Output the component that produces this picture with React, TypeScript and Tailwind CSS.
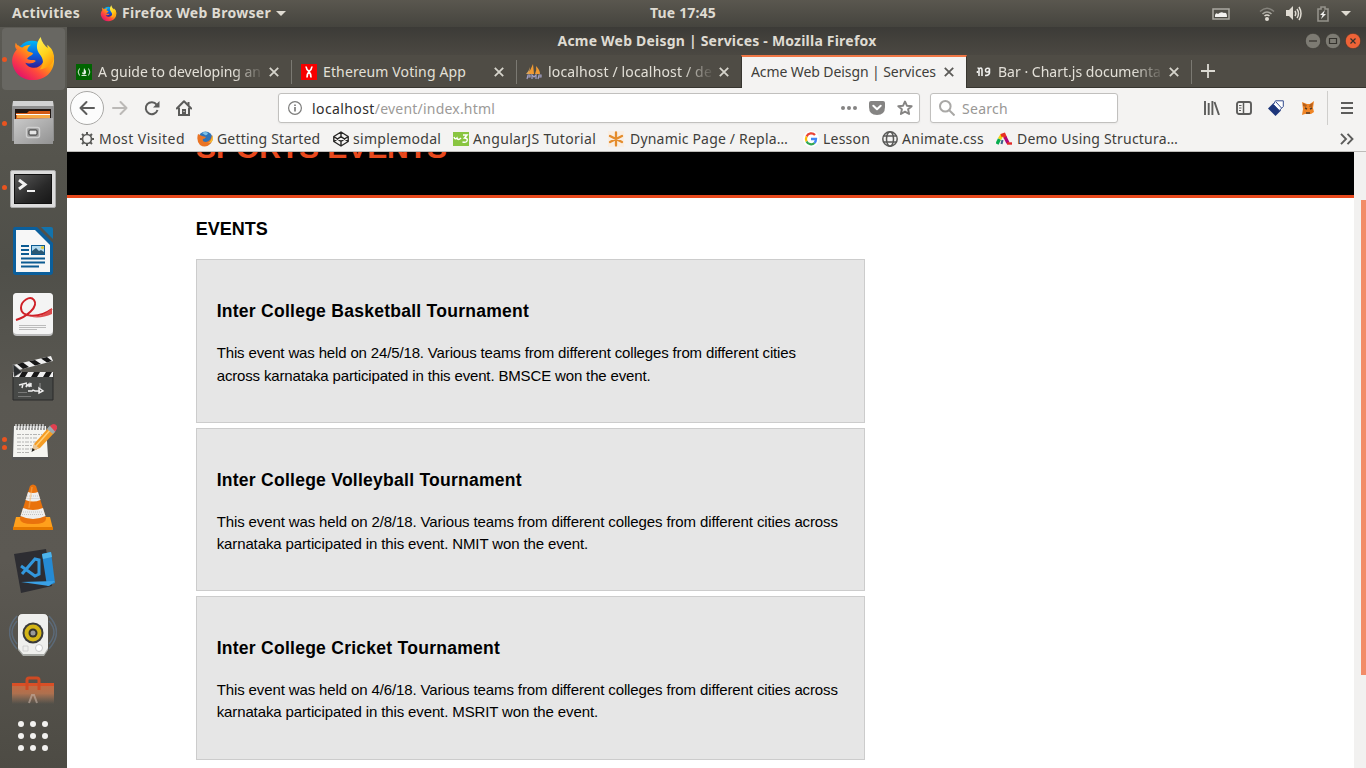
import type { ReactNode } from "react";

function FirefoxLogo({ size }: { size: number }) {
  return (
    <svg width={size} height={size} viewBox="0 0 48 48" className="shrink-0">
      <defs>
        <linearGradient id="ffBody" x1="0.85" y1="0.1" x2="0.15" y2="0.9">
          <stop offset="0" stopColor="#ffe226" />
          <stop offset="0.35" stopColor="#ffa010" />
          <stop offset="0.65" stopColor="#ff4a3c" />
          <stop offset="1" stopColor="#e3106b" />
        </linearGradient>
        <linearGradient id="ffGlobe" x1="0.5" y1="0" x2="0.5" y2="1">
          <stop offset="0" stopColor="#00b8f5" />
          <stop offset="0.45" stopColor="#0a62e0" />
          <stop offset="1" stopColor="#3a0a80" />
        </linearGradient>
        <linearGradient id="ffTail" x1="0" y1="0" x2="0.5" y2="1">
          <stop offset="0" stopColor="#fff45c" />
          <stop offset="0.6" stopColor="#ffd21c" />
          <stop offset="1" stopColor="#ff9a0c" />
        </linearGradient>
      </defs>
      <circle cx="23" cy="21" r="16" fill="url(#ffGlobe)" />
      <path d="M6 7 C5 10 5 12 7 14 C3 19 1 24 3 31 C6 41 14 46 24 46 C37 46 46 37 46 25 C46 21 45 18 43 15 L37 15 C38 24 33 34 24 33 C19 33 17 30 16 28 C19 29 24 29 27 26 C25 24 21 26 18 24 C18 22 24 20 24 18 C22 16 19 17 18 15 C18 13 20 10 22 9 C18 9 15 10 13 12 C11 12 10 11 9 10 C7 10 7 8 6 7Z" fill="url(#ffBody)" />
      <path d="M32 1 C27 7 27 14 31 19 C35 24 36 29 31 35 C39 34 46 29 46 22 C45 14 43 13 39 9 C39 11 39 12 40 13 C36 10 33 6 32 1Z" fill="url(#ffTail)" />
    </svg>
  );
}

const dock: { name: string; dots: number; art: ReactNode }[] = [
  { name: "firefox", dots: 1, art: <g /> },
  {
    name: "files",
    dots: 1,
    art: (
      <>
        <path d="M4 2 H44 L45 9 H3Z" fill="#d2d2d2" />
        <path d="M3 7 H45 V42 H3Z" fill="#8f8f8f" />
        <rect x="6" y="10" width="36" height="13" fill="#201612" />
        <path d="M7 14 H18 L20 12 H41 V21 H7Z" fill="#d35a14" />
        <path d="M7 15.500 H41" stroke="#fff" strokeWidth="1.200" />
        <path d="M8 17.500 H41" stroke="#f7a945" strokeWidth="3" />
        <path d="M5 20 L44 19 V45 H5Z" fill="url(#cabinet)" />
        <rect x="17.500" y="28.500" width="13" height="10" rx="2" fill="#9c9c9c" stroke="#d0d0d0" strokeWidth="1.400" />
        <rect x="20" y="31" width="8" height="5" rx="1" fill="#e5e5e5" stroke="#333" />
      </>
    ),
  },
  {
    name: "terminal",
    dots: 1,
    art: (
      <>
        <rect x="1.500" y="7.500" width="45" height="37" rx="1.500" fill="#dcdcdc" stroke="#a9a9a9" />
        <rect x="5" y="11" width="38" height="30" fill="#111" />
        <rect x="6" y="12" width="36" height="28" fill="url(#screen)" />
        <path d="M10 17 L16 21.500 L10 26" fill="none" stroke="#f2f2f2" strokeWidth="3" />
        <path d="M18 28 H26" stroke="#f2f2f2" strokeWidth="2" />
      </>
    ),
  },
  {
    name: "writer",
    dots: 0,
    art: (
      <>
        <path d="M6 0 H28 L44 16 V45 Q44 48 41 48 H7 Q4 48 4 45 V3 Q4 0 6 0Z" fill="#0b5f9c" />
        <path d="M32 0 H42 Q44 0 44 2 V12Z" fill="#1273ad" />
        <path d="M7 3 H26 L41 18 V45 H7Z" fill="#f7f7f7" />
        <path d="M12 19 H20 M12 23 H20 M12 27 H20 M12 31.500 H36 M12 35.500 H36 M12 39.500 H30" stroke="#0c5b92" strokeWidth="2" />
        <rect x="22.500" y="18.500" width="13" height="9" fill="#b2d9ee" stroke="#0c5b92" />
        <path d="M23 27 V24 L27 21 L30 24 L32 23 L35 25 V27Z" fill="#2b5874" />
        <circle cx="33.500" cy="20.500" r="1.600" fill="#e3c832" />
      </>
    ),
  },
  {
    name: "viewer",
    dots: 0,
    art: (
      <>
        <rect x="4" y="2" width="40" height="43" rx="4" fill="#bcbcbc" />
        <rect x="4" y="2" width="40" height="41" rx="4" fill="#f4f4f4" />
        <path d="M7 29 C17 26 30 16 25 9 C21 4 12 10 12 17 C12 26 29 28 43 18" fill="none" stroke="#cf2027" strokeWidth="2" />
        <path d="M16 23 C25 28 35 25 43 17 V23 C34 27 23 28 16 23Z" fill="#dc4b4d" />
        <path d="M10 34.500 H37 M10 36.500 H37 M10 38.500 H28" stroke="#bbb" strokeWidth="1" />
      </>
    ),
  },
  {
    name: "clapper",
    dots: 0,
    art: (
      <>
        <path d="M4 18 H44 V45 H4Z" fill="#474947" stroke="#2a2a2a" />
        <path d="M4 17 H44 V22 H4Z" fill="#f0f0f0" />
        <path d="M10 22 L13 17 H19 L16 22Z M22 22 L25 17 H31 L28 22Z M34 22 L37 17 H43 L40 22Z" fill="#181818" />
        <path d="M4 10 L42 1 L44 6 L6 16Z" fill="#f0f0f0" />
        <path d="M8 9 L14 14 L20 12 L14 7.500Z M20 6 L26 10.500 L32 9 L26 5Z M32 3.500 L38 7.500 L43 6 L38 2Z" fill="#181818" />
        <path d="M4 9 L13 17 L5 22Z" fill="#2a2d2f" stroke="#8a8a8a" strokeWidth=".5" />
        <path d="M10 30 L18 28 M14 29 L13 33 M18 29 L17 32 L20 29 V32 L22 28 V32 M19 36 H23 L24 35 L26 36 H31 M30 33 L34 36 L30 38Z" fill="none" stroke="#eee" strokeWidth="1.400" />
        <path d="M31 28 V33" stroke="#aaa" strokeWidth=".8" />
        <path d="M9 37.500 H18 M9 41.500 H22" stroke="#858585" strokeWidth=".8" />
      </>
    ),
  },
  {
    name: "notes",
    dots: 2,
    art: (
      <>
        <path d="M4 7 H38 L40 41 H3Z" fill="#555" />
        <path d="M5 7 H37 L39 38 H4Z" fill="#f5f5f2" />
        <path d="M8 6 v5 M11 6 v5 M14 6 v5 M17 6 v5 M20 6 v5 M23 6 v5 M26 6 v5 M29 6 v5 M32 6 v5 M35 6 v5" stroke="#444" strokeWidth="1" />
        <path d="M7 5 v4 M10 5 v4 M13 5 v4 M16 5 v4 M19 5 v4 M22 5 v4 M25 5 v4 M28 5 v4 M31 5 v4 M34 5 v4" stroke="#e8e8e8" strokeWidth="1.200" />
        <path d="M8 15.500 H33 M8 19 H28 M8 23 H32 M8 26.500 H24 M8 30 H28 M8 33.500 H20" stroke="#999" strokeWidth=".7" strokeDasharray="4 1 2 1" />
        <path d="M23 32 L25 25 L40 8 L46 13 L31 29Z" fill="#f59c24" />
        <path d="M27 27 L42 10" stroke="#ffd07a" strokeWidth="1.500" />
        <path d="M23 32 L25 25 L30 29Z" fill="#e9c79a" />
        <path d="M22.500 33 L23.500 29 L26 31Z" fill="#222" />
        <path d="M38 10 L41 6.500 L47 11.500 L44 15Z" fill="#9eaab0" />
        <path d="M41 7 Q45 3 48 7 Q49 9 46 12.500Z" fill="#e04050" />
      </>
    ),
  },
  {
    name: "player",
    dots: 0,
    art: (
      <>
        <path d="M7 34 H41 L44 46 H4Z" fill="#ffa01c" />
        <path d="M4 44 H44 V47 H4Z" fill="#e37900" />
        <path d="M21 3 Q24 0 27 3 L37 35 Q38 41 24 41 Q10 41 11 35Z" fill="#e9720d" />
        <path d="M19 9 Q24 11 29 9 L31.500 17 Q24 20 16.500 17Z" fill="#eee" />
        <path d="M14 25 Q24 29 34 25 L36.500 33 Q24 39 11.500 33Z" fill="#eee" />
        <path d="M18 13 H30 M17.500 15.500 H31 M14 29 H34 M13 31.500 H35" stroke="#c4c4c4" strokeDasharray="1 1" />
        <path d="M23 4 L20 25" stroke="#ffb35b" strokeWidth="1.500" opacity=".5" />
      </>
    ),
  },
  {
    name: "code",
    dots: 0,
    art: (
      <>
        <path d="M5 7 L37 2 L43 39 L12 46Z" fill="#2d2d32" />
        <path d="M33 7 L42 5 L46 36 L38 39Z" fill="#258ad4" />
        <path d="M33 7 L42 5 L43 10 L34 12Z" fill="#4eb4ec" />
        <path d="M12 35 L46 34 L40 39Z" fill="#3aa1e6" />
        <path d="M12 19 L26 29 L30 27 V13 L26 12 L13 27" fill="none" stroke="#3297dc" strokeWidth="3" />
      </>
    ),
  },
  {
    name: "speaker",
    dots: 0,
    art: (
      <>
        <path d="M8 5 Q-7 21 8 38 M8 10 Q-2 21 8 33 M40 5 Q55 21 40 38 M40 10 Q50 21 40 33" fill="none" stroke="#5f7894" strokeWidth="1.500" opacity=".6" />
        <path d="M14 3 H34 Q39 3 39 8 V39 L35 45 H14 L9 39 V8 Q9 3 14 3Z" fill="#a9aba7" />
        <path d="M14 3 H34 Q39 3 39 8 V37 L35 43 H14 L9 37 V8 Q9 3 14 3Z" fill="#efefed" />
        <circle cx="24" cy="22" r="10.500" fill="#3a3a3a" />
        <circle cx="24" cy="22" r="8.500" fill="#d4b516" />
        <circle cx="24" cy="22" r="4.500" fill="#37342c" />
        <circle cx="24" cy="22" r="2.500" fill="#999" />
        <circle cx="30" cy="37" r="3.500" fill="#fff" stroke="#c8c8c8" />
        <path d="M14 35 H19 V40 H14Z" fill="none" stroke="#ccc" strokeWidth=".8" />
      </>
    ),
  },
];

function Dock() {
  return (
    <aside className="relative flex w-[67px] shrink-0 flex-col overflow-hidden bg-[linear-gradient(180deg,#5b5a54_0%,#55544d_18%,#4f4f49_32%,#5a5852_50%,#5c5953_72%,#4d4b44_100%)] pr-px">
      <svg width="0" height="0" className="absolute">
        <defs>
          <linearGradient id="cabinet" x1="0" y1="0" x2="1" y2="1"><stop stopColor="#cacaca" /><stop offset="1" stopColor="#929292" /></linearGradient>
          <linearGradient id="screen" x1="0" y1="0" x2="1" y2="1"><stop stopColor="#585858" /><stop offset=".6" stopColor="#292929" /><stop offset="1" stopColor="#171717" /></linearGradient>
          <linearGradient id="bag" x1="0" y1="0" x2="0" y2="1"><stop stopColor="#c9693f" /><stop offset=".5" stopColor="#b8744f" stopOpacity=".9" /><stop offset="1" stopColor="#a57c60" stopOpacity="0" /></linearGradient>
        </defs>
      </svg>
      {dock.map((d, i) => (
        <div key={d.name} className="relative flex h-16 shrink-0 items-center justify-center">
          {i === 0 && <div className="absolute left-0.5 right-px top-px h-[62px] rounded bg-[#686762]" />}
          {d.dots > 0 && (
            <div className="absolute left-[2px] flex flex-col gap-[3px]">
              {Array.from({ length: d.dots }, (_, n) => <i key={n} className="size-[5px] rounded-full bg-[#e95420]" />)}
            </div>
          )}
          <div className="relative">
            {i === 0 ? <FirefoxLogo size={46} /> : <svg width="48" height="48" viewBox="0 0 48 48">{d.art}</svg>}
          </div>
        </div>
      ))}
      <div className="flex h-[38px] shrink-0 justify-center overflow-hidden pt-2">
        <svg width="48" height="30" viewBox="0 0 48 30">
          <path d="M3 8 H45 V29 H3Z" fill="url(#bag)" />
          <path d="M3 8 H45 V11 H3Z" fill="#d94f26" />
          <path d="M18 15 V5 Q18 3 20 3 H28 Q30 3 30 5 V15" fill="none" stroke="#cf4a23" strokeWidth="3" />
          <path d="M20 28 L23 20 H25 L28 28" fill="none" stroke="#c4b2a7" strokeWidth="2" opacity=".6" />
        </svg>
      </div>
      <div className="grid grid-cols-3 gap-1.5 self-center pt-[16px]">
        {Array.from({ length: 9 }, (_, n) => <i key={n} className="size-1.5 rounded-full bg-[#f2f1ef]" />)}
      </div>
    </aside>
  );
}

function TopBar() {
  return (
    <header className="grid h-[27px] shrink-0 grid-cols-[1fr_auto_1fr] items-center bg-[linear-gradient(#5a574f,#45443e)] font-bold text-[#dfdbd2]">
      <div className="flex items-center pl-3">
        <span className="w-[88px] pb-0.5 tracking-[0.3px]">Activities</span>
        <FirefoxLogo size={17} />
        <span className="ml-[5px] pb-0.5 tracking-[0.3px]">Firefox Web Browser</span>
        <svg width="10" height="6" className="ml-[5px]"><path d="M0 0 H10 L5 5Z" fill="currentColor" /></svg>
      </div>
      <span className="pb-0.5 tracking-[0.17px]">Tue 17:45</span>
      <div className="flex items-center justify-end pr-[15px]">
        <svg width="18" height="12" viewBox="0 0 18 12" className="mr-[29px]">
          <rect x="1" y="1" width="16" height="10" fill="none" stroke="#aaa8a1" strokeWidth="1.500" />
          <path d="M3 9 V7 Q4 4 6 6 Q9 3 12 5 Q15 4 15 9Z" fill="#f2f1ef" />
        </svg>
        <svg width="16" height="14" viewBox="0 0 16 14" className="mr-[11px]" fill="none" strokeWidth="1.600">
          <path d="M1 4.500 Q8 -2 15 4.500" stroke="#85837c" /><path d="M3.500 7 Q8 3 12.500 7" stroke="#aaa8a0" /><path d="M5.500 9 Q8 7 10.500 9" stroke="#dfdbd2" /><circle cx="8" cy="12" r="2" fill="#dfdbd2" stroke="none" />
        </svg>
        <svg width="16" height="15" viewBox="0 0 16 15" className="mr-[15px]">
          <path d="M0 4 H3 L7 0 V14 L3 10 H0Z" fill="#dfdbd2" />
          <path d="M9 5 Q10.500 7.500 9 10 M11 3 Q14 7.500 11 12 M13 1 Q17 7.500 13 14" fill="none" stroke="#dfdbd2" strokeWidth="1.500" />
        </svg>
        <svg width="12" height="16" viewBox="0 0 12 16" className="mr-[12px]">
          <path d="M4 1 H8 V3 H11 V15 H1 V3 H4Z" fill="none" stroke="#94928b" strokeWidth="1.600" />
          <path d="M8 4 L3 9 H5.500 L4 13 L9 8 H6.500Z" fill="#f2f1ef" />
        </svg>
        <svg width="10" height="6"><path d="M0 0 H10 L5 5Z" fill="currentColor" /></svg>
      </div>
    </header>
  );
}

function TitleBar() {
  return (
    <div className="relative flex h-7 items-center justify-center bg-[linear-gradient(#3c3b37,#4b4842)] font-bold text-[#dfdbd2]">
      <span className="ml-[1px] tracking-[0.21px]">Acme Web Deisgn | Services - Mozilla Firefox</span>
      <div className="absolute right-[5px] top-[6px] flex gap-1">
        {["M4 8 H12", "M4.500 5.500 H11.500 V10.500 H4.500Z", "M5.500 5.500 L10.500 10.500 M10.500 5.500 L5.500 10.500"].map((d, i) => (
          <svg key={d} width="16" height="16"><circle cx="8" cy="8" r="7.700" fill={i === 2 ? "#ee6337" : "#7d7b73"} stroke="#34322d" strokeWidth=".6" /><path d={d} fill="none" stroke="#34322d" strokeWidth="1.200" /></svg>
        ))}
      </div>
    </div>
  );
}

const tabs = [
  {
    text: "A guide to developing an", cls: "tracking-[-0.03px]", fade: true, active: false,
    icon: <><path d="M0 0H16V16H0Z" fill="#006400" /><path d="M3.500 4.500 Q.8 8 3.500 11.500 M12.500 4.500 Q15.200 8 12.500 11.500" fill="none" stroke="#d8e8d8" /><path d="M8 4 Q10.500 7 10 9 Q9.500 10.500 8 10.500 Q5.500 10.500 6.500 8 L7.500 9Z" fill="#e8f2e8" /><path d="M5.500 11.500H10.500" stroke="#d8e8d8" /></>,
  },
  {
    text: "Ethereum Voting App", cls: "tracking-[0.13px]", fade: false, active: false,
    icon: <><path d="M0 0H16V16H0Z" fill="#f60000" /><path d="M5 2.500 Q5.500 6 8 7.500 Q10.500 6 11 2.500 M8 7.500 Q6 9.500 6 13.500 M8 7.500 Q10 9.500 10 13.500" fill="none" stroke="#fff" strokeWidth="1.700" /></>,
  },
  {
    text: "localhost / localhost / de", cls: "tracking-[0.16px]", fade: true, active: false,
    icon: <><path d="M7 0 L8 10 H1 Q5 6 7 0Z M10 2 Q14 6 14 10 H9 Q11 6 10 2Z" fill="#f09a32" /><path d="M4 3 Q3 7 0 10 L3 10Z" fill="#dba65d" /><path d="M1 15 L2 11 H4 L4 13 H2 M6 15 V11 L8 13 L10 11 V15 M12 15 L13 11 H15 V13 H13" fill="none" stroke="#a3a1c6" strokeWidth="1.200" /></>,
  },
  { text: "Acme Web Deisgn | Services", cls: "tracking-[-0.09px]", fade: false, active: true, icon: null },
  {
    text: "Bar · Chart.js documenta", cls: "tracking-[0.01px]", fade: true, active: false,
    icon: <g fill="none" stroke="#f0f0ee"><path d="M1.500 4 Q3.500 4 3 6 V12 M3.500 4.500 Q6 3 6 6 V12" strokeWidth="1.600" /><path d="M1.500 7 V9" strokeWidth="1.600" /><path d="M13.500 4.500 Q10 3.500 9.500 6 Q9.500 8.500 12 8 Q13.500 7.500 13.500 4.500 V9 Q13 11.500 9 11.500" strokeWidth="1.500" /></g>,
  },
];

function TabStrip() {
  return (
    <div className="flex h-[33px] border-b border-[#37352f] bg-[#4f4c45]">
      {tabs.map((t, i) => (
        <div
          key={t.text}
          className={
            t.active
              ? "relative -mb-px -ml-px flex h-[33px] w-[226px] items-center border-x border-t-2 border-x-[#37352f] border-t-[#f07746] bg-[#f4f3f2] pb-[2px] pl-[9px] text-[#3f3e3a]"
              : "relative flex h-full w-[225px] items-center pl-[9px] pt-px text-[#e3e0d8]"
          }
        >
          {t.icon && <svg width="16" height="16" viewBox="0 0 16 16" className="mr-[6px] shrink-0">{t.icon}</svg>}
          <span className={"overflow-hidden whitespace-nowrap " + t.cls + (t.active ? " w-[188px]" : " w-[165px]") + (t.fade ? " [mask-image:linear-gradient(90deg,#000_82%,transparent_101%)]" : "")}>{t.text}</span>
          <svg width="10" height="10" className={t.active ? "ml-[5px]" : "ml-[6px]"}><path d="M.8 .8 L9.200 9.200 M9.200 .8 L.8 9.200" stroke={t.active ? "#5c5b58" : "#d6d4cc"} strokeWidth="1.800" /></svg>
          {(i === 0 || i === 1 || i === 4) && <i className="absolute right-0 top-[5px] h-6 w-px bg-[#7b7972]" />}
        </div>
      ))}
      <svg width="14" height="14" className="ml-[9px] mt-[9px]"><path d="M7 0V14M0 7H14" stroke="#dcdad3" strokeWidth="1.800" /></svg>
    </div>
  );
}

function NavBar() {
  return (
    <div className="flex h-10 items-center bg-[#f4f3f2] pl-[3px] text-[#5c5c5b]">
      <div className="flex size-[34px] items-center justify-center rounded-full border border-[#a9a8a6] bg-[#fcfcfc]">
        <svg width="16" height="16" viewBox="0 0 16 16" fill="none" stroke="currentColor" strokeWidth="2" strokeLinecap="round" strokeLinejoin="round"><path d="M15 8H1.500M7.500 2 L1.500 8 L7.500 14" /></svg>
      </div>
      <svg width="16" height="16" viewBox="0 0 16 16" className="ml-2" fill="none" stroke="#bbb9b7" strokeWidth="2" strokeLinecap="round" strokeLinejoin="round"><path d="M1 8H14.500M8.500 2 L14.500 8 L8.500 14" /></svg>
      <svg width="16" height="16" viewBox="0 0 16 16" className="ml-4" fill="none" stroke="currentColor" strokeWidth="2"><path d="M12.600 4.600 A6 6 0 1 0 13.500 10" /><path d="M15.500 1V7.500H9Z" fill="currentColor" stroke="none" /></svg>
      <svg width="16" height="16" viewBox="0 0 16 16" className="ml-4" fill="none" stroke="currentColor" strokeWidth="2"><path d="M.8 8.500 L8 1.300 L15.200 8.500" strokeLinecap="round" strokeLinejoin="round" /><path d="M3 7.500V15H13V7.500 M12.500 5V2" /><path d="M6 15V9H10V15Z" fill="currentColor" stroke="none" /><path d="M7.500 11H8.500V12H7.500Z" fill="#fff" stroke="none" /></svg>

      <div className="ml-[86px] flex h-[30px] w-[642px] items-center rounded-[3px] border border-[#c1c0be] bg-white pl-[9px] pr-[6px] shadow-xs">
        <svg width="14" height="14" viewBox="0 0 14 14" fill="none" stroke="#7d7d7c"><circle cx="7" cy="7" r="6.400" strokeWidth="1.200" /><path d="M7 6V10.500M7 3.500V5" strokeWidth="1.700" /></svg>
        <span className="ml-[10px] pt-0.5 tracking-[0.4px] text-[#2f2e2c]">localhost</span>
        <span className="grow pt-0.5 tracking-[0.21px] text-[#9c9a98]">/event/index.html</span>
        <svg width="16" height="4" className="mr-[12px]" fill="#858483"><circle cx="2" cy="2" r="2" /><circle cx="8" cy="2" r="2" /><circle cx="14" cy="2" r="2" /></svg>
        <svg width="16" height="14" viewBox="0 0 16 14" className="mr-3"><path d="M2 0H14Q16 0 16 2V6Q16 14 8 14Q0 14 0 6V2Q0 0 2 0Z" fill="#858483" /><path d="M4.300 4.700 L8 8.300 L11.700 4.700" fill="none" stroke="#fff" strokeWidth="2" strokeLinecap="round" strokeLinejoin="round" /></svg>
        <svg width="16" height="16" viewBox="0 0 16 16" fill="none" stroke="#858483" strokeWidth="1.900" strokeLinejoin="round"><path d="M8 1.500 L9.900 5.700 L14.700 6.200 L11.100 9.300 L12.100 14 L8 11.600 L3.900 14 L4.900 9.300 L1.300 6.200 L6.100 5.700Z" /></svg>
      </div>

      <div className="ml-[10px] flex h-[30px] w-[188px] items-center rounded-[3px] border border-[#c1c0be] bg-white pl-[8px] shadow-xs">
        <svg width="16" height="16" viewBox="0 0 16 16" fill="none" stroke="#a9a8a6" strokeWidth="2"><circle cx="6.300" cy="6.300" r="5.300" /><path d="M10 10 L15.500 15.500" /></svg>
        <span className="ml-[7px] pt-0.5 tracking-[0.28px] text-[#999795]">Search</span>
      </div>

      <svg width="16" height="14" viewBox="0 0 16 14" className="ml-[86px]" stroke="currentColor" strokeWidth="1.900"><path d="M1 0V14M4.700 2V14M8.400 0V14M10.500 1L15 14" /></svg>
      <svg width="16" height="14" viewBox="0 0 16 14" className="ml-4" fill="none" stroke="currentColor"><rect x="1" y="1" width="14" height="12" rx="2" strokeWidth="1.900" /><path d="M7.500 1V13" strokeWidth="1.500" /><path d="M3 4.500H5.500M3 7H5.500M3 9.500H5" /></svg>
      <svg width="16" height="16" viewBox="0 0 16 16" className="ml-4"><path d="M0 8.500 L5.500 3 L13 10.500 L7.500 16Z" fill="#1d367b" /><path d="M7.500 .8H15.300V6.500L11.300 10.500L5.500 4.500Z" fill="#fff" stroke="#344c8e" /><path d="M8 2L13.500 8" stroke="#344c8e" /></svg>
      <svg width="12" height="14" viewBox="0 0 12 14" className="ml-[18px]"><path d="M0 1 L5 3 H8 L12 0 L11 7 L12 11 L9 13 H3 L0 14 L1 8Z" fill="#ef8425" /><path d="M1 2L5 4L4 6L1 5Z M8 3L11 2L10 6L7 6Z" fill="#b7601b" /><path d="M3 7L5 8 M8 8L10 7 M4 12H8" stroke="#563a24" strokeWidth="1.500" /></svg>
      <i className="ml-[13px] h-[34px] w-px bg-[#cfcecc]" />
      <svg width="12" height="12" className="ml-[13px]"><path d="M0 1H12M0 6H12M0 11H12" stroke="currentColor" strokeWidth="1.900" /></svg>
    </div>
  );
}

const bookmarks = [
  { text: "Most Visited", w: "w-[118px]", cls: "tracking-[0.46px]", icon: <g fill="none" stroke="#5a5a58"><circle cx="8" cy="8" r="4.500" strokeWidth="1.700" /><path d="M8 1V3.500M8 12.500V15M1 8H3.500M12.500 8H15M3 3L4.800 4.800M11.200 11.200L13 13M13 3L11.200 4.800M4.800 11.200L3 13" strokeWidth="2" /></g> },
  { text: "Getting Started", w: "w-[136px]", cls: "tracking-[0.18px]", icon: <><circle cx="8.500" cy="7.500" r="7" fill="#2f73b8" /><path d="M5 2 Q8 0 11 2 Q10 5 8 4Z" fill="#7cc0e8" /><path d="M1 3 Q-1 10 3 14 Q9 18 14 12 Q17 8 15 4 Q14 10 9 11 Q5 11 6 8 Q8 8 9 6 L5 5 Q3 4 1 3Z" fill="#ea7425" /><path d="M15 4Q15 10 11 12Q16 12 16 7Z" fill="#f7c135" /></> },
  { text: "simplemodal", w: "w-[120px]", cls: "tracking-[0.28px]", icon: <path d="M8 1 L15.200 5.500V10.500L8 15L.8 10.500V5.500Z M.8 5.500L8 10.300L15.200 5.500 M.8 10.500L8 5.700L15.200 10.500 M8 1V5.700 M8 10.300V15" fill="none" stroke="#282726" strokeWidth="1.400" strokeLinejoin="round" /> },
  { text: "AngularJS Tutorial", w: "w-[155px]", cls: "tracking-[0.32px]", icon: <><path d="M0 1H16V15H0Z" fill="#89c541" /><path d="M1 6 Q2 9 4 7 Q5 10 8 7 M10 4 H14 L11.500 7 Q15 7 14 10 Q13 12 9.500 11" fill="none" stroke="#fff" strokeWidth="1.500" /></> },
  { text: "Dynamic Page / Repla…", w: "w-[195px]", cls: "tracking-[0.19px] ml-[2px]", icon: <><path d="M0 0H16V16H0Z" fill="#f9eee2" /><path d="M8 1.500V14.500M2 5L14 11M14 5L2 11" stroke="#e48c2c" strokeWidth="2.300" strokeLinecap="round" /></> },
  { text: "Lesson", w: "w-[79px]", cls: "tracking-[0.21px]", icon: <><circle cx="8" cy="8" r="8" fill="#fff" /><g fill="none" strokeWidth="2.300"><path d="M12 4 A5 5 0 0 0 3.600 5.500" stroke="#ea4335" /><path d="M3.600 5.500 A5 5 0 0 0 3.600 10.500" stroke="#fbbc05" /><path d="M3.600 10.500 A5 5 0 0 0 11.500 12" stroke="#34a853" /><path d="M11.500 12 Q13 10.500 13 8H8" stroke="#4285f4" /></g></> },
  { text: "Animate.css", w: "w-[114px]", cls: "tracking-[0.27px]", icon: <g fill="none" stroke="#5a5a58" strokeWidth="1.500"><circle cx="8" cy="8" r="7.200" /><ellipse cx="8" cy="8" rx="3.500" ry="7.200" /><path d="M1.500 5H14.500M1.500 11H14.500" /></g> },
  { text: "Demo Using Structura…", w: "w-[190px]", cls: "tracking-[0.2px] ml-px", icon: <g fill="none" strokeWidth="3.400"><path d="M1 13 L3.500 8" stroke="#08ad4e" /><path d="M3.500 8 L6 4" stroke="#f2d312" /><path d="M5 4.500 L8 3.500 L9.500 7" stroke="#e83024" /><path d="M9 6 L12 12" stroke="#b20776" /><path d="M11 12.500H16" stroke="#e12a28" strokeWidth="2.400" /><path d="M5.500 13 L6.500 9" stroke="#3d638c" strokeWidth="2" /></g> },
];

function BookmarkBar() {
  return (
    <div className="flex h-6 items-center border-b border-[#bdbbb8] bg-[#f4f3f2] pb-px pl-3 pr-3 text-[#3f3e3b]">
      {bookmarks.map((b) => (
        <div key={b.text} className={"flex shrink-0 items-center gap-1 whitespace-nowrap " + b.w}>
          <svg width="16" height="16" viewBox="0 0 16 16" className="shrink-0">{b.icon}</svg>
          <span className={b.cls}>{b.text}</span>
        </div>
      ))}
      <svg width="14" height="12" className="ml-auto" fill="none" stroke="#5c5c5b" strokeWidth="1.900"><path d="M1 .8L6 6L1 11.200M7.500 .8L12.500 6L7.500 11.200" /></svg>
    </div>
  );
}

const events = [
  { title: "Inter College Basketball Tournament", cls: "pr-2 tracking-[-0.15px]", body: "This event was held on 24/5/18. Various teams from different colleges from different cities across karnataka participated in this event. BMSCE won the event." },
  { title: "Inter College Volleyball Tournament", cls: "tracking-[-0.12px]", body: "This event was held on 2/8/18. Various teams from different colleges from different cities across karnataka participated in this event. NMIT won the event." },
  { title: "Inter College Cricket Tournament", cls: "tracking-[-0.12px]", body: "This event was held on 4/6/18. Various teams from different colleges from different cities across karnataka participated in this event. MSRIT won the event." },
];

function Page() {
  return (
    <div className="flex min-h-0 grow overflow-hidden">
      <main className="h-full w-[1287px] overflow-hidden bg-white font-['Liberation_Sans',Arial,sans-serif] text-[15px] leading-[22.5px] text-black">
        <header className="h-[46px] overflow-hidden border-b-[3px] border-[#e8491d] bg-black pl-[129px]">
          <h1 className="-mt-[19px] text-[30px] font-bold leading-[30px] tracking-[-0.06px] text-[#e8491d]">SPORTS EVENTS</h1>
        </header>
        <section className="pl-[128.7px] pt-[18px]">
          <h2 className="text-[18px] font-bold leading-[27px]">EVENTS</h2>
          <ul className="mt-[16.4px] flex w-[669.2px] flex-col gap-[5px]">
            {events.map((e) => (
              <li key={e.title} className="border border-[#cccccc] bg-[#e6e6e6] px-5 pb-[34.63px] pt-[37.92px]">
                <h3 className="text-[17.55px] font-bold leading-[26.3px] tracking-[0.25px]">{e.title}</h3>
                <p className={"mt-[17.55px] " + e.cls}>{e.body}</p>
              </li>
            ))}
          </ul>
        </section>
      </main>
      <div className="flex w-3 justify-end bg-[#f2f1f0] pt-12">
        <i className="h-[475px] w-[5px] bg-[#f28c68]" />
      </div>
    </div>
  );
}

export default function App() {
  return (
    <div className="flex h-[768px] w-[1366px] flex-col overflow-hidden bg-[#4b4842] font-['Noto_Sans',sans-serif] text-sm leading-5">
      <TopBar />
      <div className="flex min-h-0 grow">
        <Dock />
        <div className="flex min-w-0 grow flex-col">
          <TitleBar />
          <TabStrip />
          <NavBar />
          <BookmarkBar />
          <Page />
        </div>
      </div>
    </div>
  );
}
